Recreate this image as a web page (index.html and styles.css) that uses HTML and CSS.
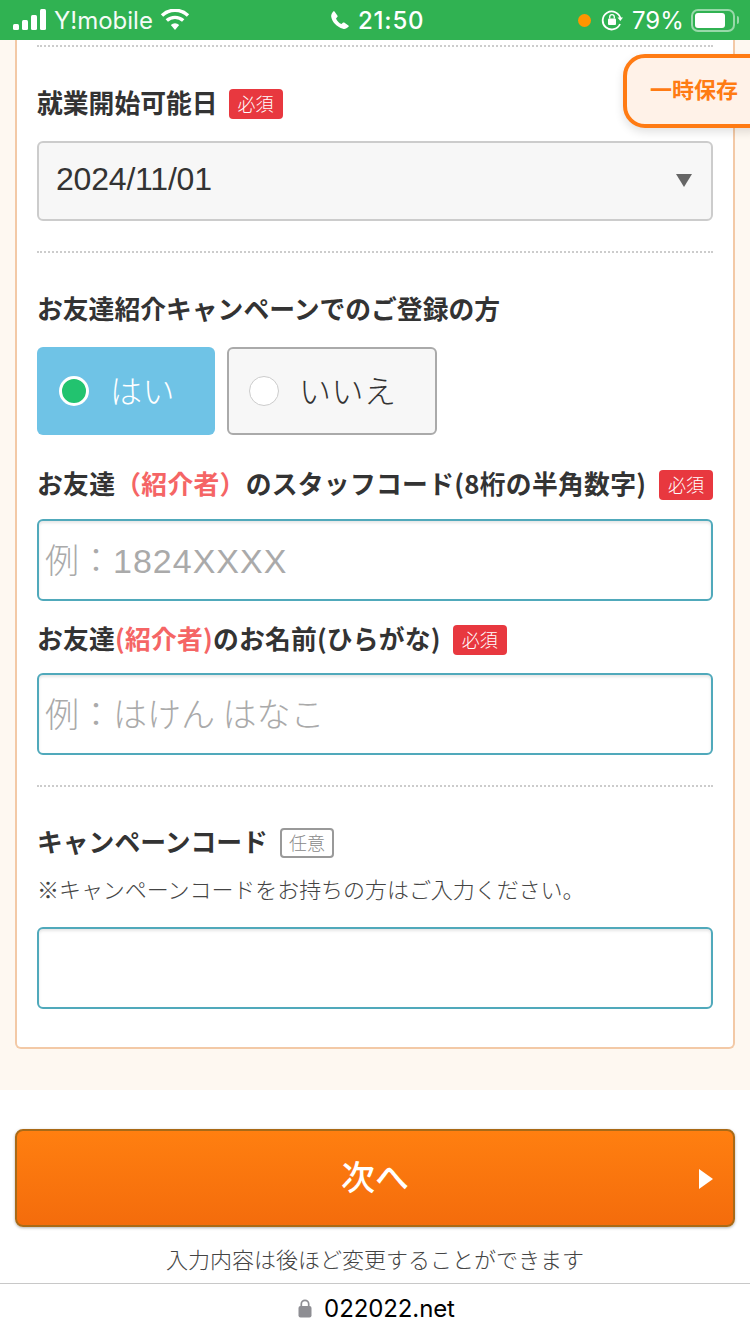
FILE: index.html
```html
<!DOCTYPE html>
<html lang="ja">
<head>
<meta charset="utf-8">
<title>登録フォーム</title>
<link rel="stylesheet" href="styles.css">
</head>
<body>
<div class="page">
  <header class="status">
    <div class="st-left">
      <svg class="signal" width="34" height="22" viewBox="0 0 34 22"><rect x="0" y="15" width="6" height="6" rx="1.5"/><rect x="9" y="11" width="6" height="10" rx="1.5"/><rect x="18" y="6" width="6" height="15" rx="1.5"/><rect x="27" y="0" width="6" height="21" rx="1.5"/></svg>
      <span class="carrier">Y!mobile</span>
      <svg class="wifi" width="30" height="22" viewBox="0 0 30 22"><path d="M15 21l-4.2-5a6.2 6.2 0 0 1 8.4 0z" fill="#fff"/><path d="M6.8 11.6a12 12 0 0 1 16.4 0M2 6.4a19 19 0 0 1 26 0" fill="none" stroke="#fff" stroke-width="3.4"/></svg>
    </div>
    <div class="st-center">
      <svg width="20" height="20" viewBox="0 0 20 20"><path d="M4.5 1.5l3 4.2c.3.5.2 1-.2 1.4L6 8.400c.9 2.300 3 4.600 5.500 5.700l1.300-1.300c.4-.4 1-.5 1.400-.2l4.200 2.800c.5.3.5 1 .1 1.400-1.500 1.500-3.500 2.600-5.500 2-6.500-1.900-10.700-6.500-11.800-12-.3-1.700.7-3.700 2-5.200.4-.4 1-.5 1.300-.1z" fill="#fff"/></svg>
      <span class="clock">21:50</span>
    </div>
    <div class="st-right">
      <span class="dot"></span>
      <svg width="22" height="22" viewBox="0 0 22 22"><path d="M19.500 9.500A9 9 0 1 0 19 15" fill="none" stroke="#fff" stroke-width="1.800"/><path d="M16.500 8.500h5.500l-2.700 3.500z" fill="#fff"/><rect x="7" y="9.500" width="8" height="6.500" rx="1" fill="#fff"/><path d="M8.700 9.500V8a2.300 2.300 0 0 1 4.600 0v1.500" fill="none" stroke="#fff" stroke-width="1.300"/></svg>
      <span class="pct">79%</span>
      <span class="battery"><span class="battery-fill"></span></span>
      <span class="battery-tip"></span>
    </div>
  </header>

  <main class="band">
    <div class="card">
      <div class="rule"></div>

      <div class="label-row row-start"><span class="label">就業開始可能日</span><span class="req">必須</span></div>
      <div class="select"><span class="select-text">2024/11/01</span><span class="caret"></span></div>
      <div class="rule rule-mid"></div>

      <div class="label-row row-friend"><span class="label">お友達紹介キャンペーンでのご登録の方</span></div>
      <div class="radios">
        <div class="radio radio-on"><span class="disc disc-on"></span><span class="radio-text">はい</span></div>
        <div class="radio radio-off"><span class="disc"></span><span class="radio-text">いいえ</span></div>
      </div>

      <div class="label-row row-code"><span class="label spaced">お友達<span class="accent">（紹介者）</span>のスタッフコード(8桁の半角数字)</span><span class="req req-end">必須</span></div>
      <div class="input"><span class="ph">例：<span class="ph-num">1824XXXX</span></span></div>

      <div class="label-row row-name"><span class="label tight">お友達<span class="accent">(紹介者)</span>のお名前(ひらがな)</span><span class="req">必須</span></div>
      <div class="input"><span class="ph">例：はけん はなこ</span></div>
      <div class="rule rule-low"></div>

      <div class="label-row row-camp"><span class="label">キャンペーンコード</span><span class="opt">任意</span></div>
      <p class="hint">※キャンペーンコードをお持ちの方はご入力ください。</p>
      <div class="input"></div>
    </div>
  </main>

  <section class="actions">
    <div class="next"><span class="next-text">次へ</span><span class="next-arrow"></span></div>
    <p class="later">入力内容は後ほど変更することができます</p>
  </section>

  <footer class="url">
    <svg width="14" height="19" viewBox="0 0 14 19"><rect x="0.500" y="7" width="13" height="11.500" rx="2" fill="#8e8e93"/><path d="M3.300 8V5a3.700 3.700 0 0 1 7.400 0v3" fill="none" stroke="#8e8e93" stroke-width="1.700"/></svg>
    <span class="url-text">022022.net</span>
  </footer>

  <div class="save">一時保存</div>
</div>
</body>
</html>
```
FILE: styles.css
```css
* { box-sizing: border-box; }
html, body { margin: 0; padding: 0; background: #fff; }
body { font-family: "Noto Sans CJK JP", "Liberation Sans", sans-serif; color: #333; }
.page { position: relative; width: 750px; height: 1334px; overflow: hidden; display: flex; flex-direction: column; }

.status { height: 40px; flex: none; background: #30b252; color: #fff; display: flex; align-items: center; padding: 0 0 0 13px; }
.status svg { display: block; }
.signal { fill: #fff; }
.st-left { display: flex; align-items: center; gap: 7px; width: 317px; flex: none; }
.carrier { font: 400 24px "Inter", sans-serif; opacity: .95; }
.st-center { display: flex; align-items: center; gap: 8px; }
.clock { font: 500 24px "Inter", sans-serif; letter-spacing: .8px; }
.st-right { display: flex; align-items: center; width: 172px; margin-left: auto; }
.dot { width: 13px; height: 13px; border-radius: 50%; background: #ff9500; margin-right: 10px; }
.pct { font: 400 24px "Inter", sans-serif; margin-left: 9px; }
.battery { width: 44px; height: 23px; border: 2px solid rgba(255,255,255,.5); border-radius: 7px; padding: 2px; margin-left: 7px; display: block; }
.battery-fill { display: block; width: 30px; height: 15px; background: #fff; border-radius: 3px; }
.battery-tip { width: 2px; height: 8px; background: rgba(255,255,255,.5); margin-left: 2px; border-radius: 0 2px 2px 0; }

.band { flex: none; height: 1050px; background: #fef8f1; padding: 0 15px; }
.card { height: 1009px; background: #fff; border: 2px solid #f3c9a6; border-top: 0; border-radius: 0 0 6px 6px; padding: 5px 20px 0; }

.rule { border-top: 2px dotted #ccc; }
.rule-mid { margin-top: 30px; }
.rule-low { margin-top: 30px; }

.label-row { display: flex; align-items: center; gap: 12px; height: 40px; }
.label { font-size: 25.8px; line-height: 36px; margin-bottom: 4px; font-weight: 700; color: #333; white-space: nowrap; }
.spaced { letter-spacing: .28px; }
.tight { letter-spacing: .2px; }
.accent { color: #f56565; }
.req { flex: none; width: 54px; height: 30px; border-radius: 4px; background: #e8383f; color: #fff; font-size: 18px; line-height: 29px; text-align: center; font-weight: 300; }
.req-end { margin-left: auto; }
.opt { flex: none; width: 54px; height: 30px; border-radius: 4px; border: 2px solid #999; color: #888; font-size: 18px; line-height: 25px; text-align: center; font-weight: 300; }
.row-start { margin-top: 37px; margin-bottom: 17px; gap: 11px; }
.row-friend { margin-top: 37px; margin-bottom: 17px; }
.row-code { margin-top: 30px; margin-bottom: 14px; }
.row-name { margin-top: 19px; margin-bottom: 13px; }
.row-camp { margin-top: 36px; }

.select { height: 80px; border: 2px solid #ccc; border-radius: 6px; background: #f7f7f7; display: flex; align-items: center; justify-content: space-between; padding: 0 19px 4px 17px; font: 400 32px "Liberation Sans", sans-serif; }
.select-text { letter-spacing: -.2px; }
.caret { width: 0; height: 0; border-left: 8px solid transparent; border-right: 8px solid transparent; border-top: 13px solid #666; margin-top: 3px; }

.radios { display: flex; gap: 12px; }
.radio { height: 88px; border-radius: 6px; display: flex; align-items: center; font-size: 32px; font-weight: 300; }
.radio-text { letter-spacing: .5px; margin-bottom: 4px; }
.radio-on { width: 178px; background: #6fc3e6; color: #fff; padding-left: 22px; gap: 21px; }
.radio-off { width: 210px; background: #f7f7f7; border: 2px solid #aaa; padding-left: 20px; gap: 20px; }
.disc { width: 30px; height: 30px; border-radius: 50%; background: #fff; border: 1px solid #ccc; flex: none; }
.disc-on { background: #22c36f; border: 3px solid #fff; }

.input { height: 82px; border: 2px solid #50a9bb; border-radius: 6px; background: #fff; box-shadow: inset 0 2px 3px rgba(0,0,0,.1); display: flex; align-items: center; padding: 0 0 4px 6px; }
.ph { font-size: 34px; color: #aaa; font-weight: 300; white-space: nowrap; }
.ph-num { font-family: "Liberation Sans", sans-serif; font-weight: 400; letter-spacing: 1px; }
.hint { margin: 9px 0 23px; font-size: 22px; line-height: 32px; color: #444; font-weight: 300; white-space: nowrap; letter-spacing: -.06px; }

.actions { flex: 1; padding: 39px 15px 0; display: flex; flex-direction: column; align-items: stretch; }
.next { position: relative; height: 98px; border-radius: 8px; border: 2px solid #a96a17; background: linear-gradient(#ff7f10, #f46c0c); color: #fff; font-size: 34px; font-weight: 500; display: flex; align-items: center; justify-content: center; box-shadow: 0 1px 3px rgba(0,0,0,.3); }
.next-text { margin-bottom: 6px; }
.next-arrow { position: absolute; right: 20px; top: 38px; width: 0; height: 0; border-left: 14px solid #fff; border-top: 10px solid transparent; border-bottom: 10px solid transparent; }
.later { margin: 15px 0 0; text-align: center; font-size: 22px; line-height: 32px; color: #444; font-weight: 300; }

.url { flex: none; height: 51px; border-top: 1px solid #c8c8c8; display: flex; align-items: center; justify-content: center; gap: 12px; font: 400 24px "Inter", "Liberation Sans", sans-serif; color: #000; padding: 0 0 2px 3px; background: #fff; }
.url-text { letter-spacing: -.1px; }

.save { position: absolute; left: 623px; top: 54px; width: 150px; height: 74px; border: 4px solid #ff7b13; border-radius: 22px; background: #fff2e8; color: #ff7b13; font-size: 22px; font-weight: 700; line-height: 61px; padding-left: 23px; box-shadow: 0 4px 10px rgba(0,0,0,.12); white-space: nowrap; }
```
